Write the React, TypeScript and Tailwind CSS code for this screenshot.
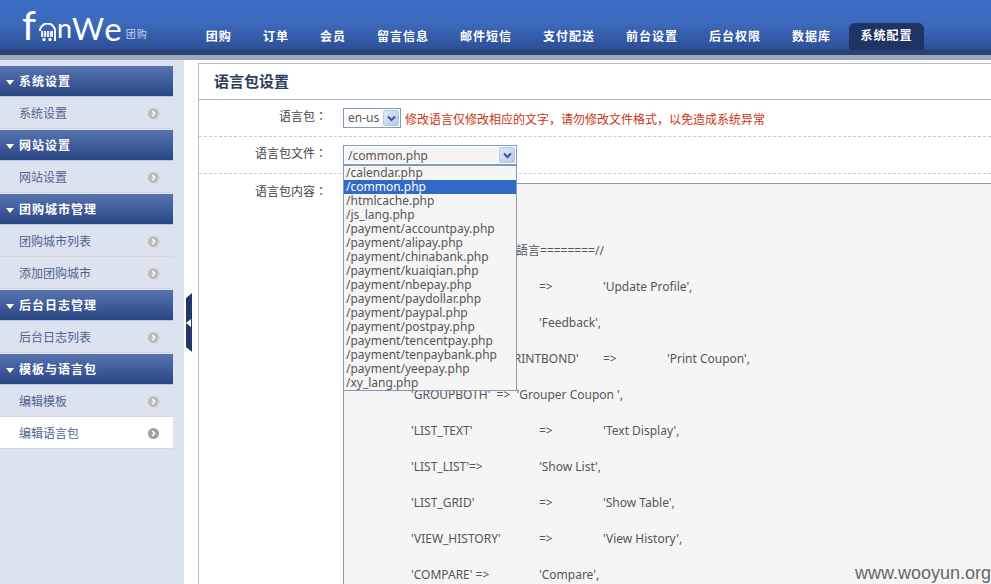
import React from 'react';

const navItems = ['团购', '订单', '会员', '留言信息', '邮件短信', '支付配送', '前台设置', '后台权限', '数据库'];

const menu = [
  { title: '系统设置', items: ['系统设置'] },
  { title: '网站设置', items: ['网站设置'] },
  { title: '团购城市管理', items: ['团购城市列表', '添加团购城市'] },
  { title: '后台日志管理', items: ['后台日志列表'] },
  { title: '模板与语言包', items: ['编辑模板', '编辑语言包'] },
];

const files = [
  '/calendar.php',
  '/common.php',
  '/htmlcache.php',
  '/js_lang.php',
  '/payment/accountpay.php',
  '/payment/alipay.php',
  '/payment/chinabank.php',
  '/payment/kuaiqian.php',
  '/payment/nbepay.php',
  '/payment/paydollar.php',
  '/payment/paypal.php',
  '/payment/postpay.php',
  '/payment/tencentpay.php',
  '/payment/tenpaybank.php',
  '/payment/yeepay.php',
  '/xy_lang.php',
];

const langText = `\t//==============語言========//
\t'UPDATE_PROFILE'\t=>\t'Update Profile',
\t'FEEDBACK'=>\t'Feedback',
\t'GROUPON_USE_PRINTBOND'\t=>\t'Print Coupon',
\t'GROUPBOTH'  =>  'Grouper Coupon ',
\t'LIST_TEXT'\t\t=>\t'Text Display',
\t'LIST_LIST'=>\t'Show List',
\t'LIST_GRID'\t=>\t'Show Table',
\t'VIEW_HISTORY'\t=>\t'View History',
\t'COMPARE' =>\t'Compare',`;

const SelectArrow = () => (
  <span className="flex h-4 w-4 items-center justify-center rounded-[2px] border border-[#b5c8ea] bg-gradient-to-br from-[#dfe8fa] to-[#b4c8ee]">
    <svg width="9" height="7" viewBox="0 0 9 7">
      <path d="M1 1.5 L4.5 5 L8 1.5" fill="none" stroke="#3d5a8c" strokeWidth="2" />
    </svg>
  </span>
);

const ItemIcon = ({ active }: { active: boolean }) => (
  <svg width="11" height="11" viewBox="0 0 11 11" className="shrink-0">
    <circle cx="5.5" cy="5.5" r="5.5" fill={active ? '#a0a0a0' : '#bcbcbc'} />
    <path d="M4.2 3 L6.6 5.5 L4.2 8" fill="none" stroke="#fff" strokeWidth="1.6" />
  </svg>
);

const Logo = () => (
  <div className="flex h-[43px] items-end pl-[22px] text-white [font-family:Lato,sans-serif]">
    <span className="text-[40px] leading-[36px]">f</span>
    <svg width="17" height="19" viewBox="0 0 17 19" className="mb-[1px] ml-[3px]">
      <path d="M1 8 A7.5 7.5 0 0 1 16 8 L16 18" fill="none" stroke="#fff" strokeWidth="2" />
      <rect x="2" y="8" width="12" height="6" fill="#e8ecf4" />
      <path d="M4.5 8v6M7.5 8v6M10.500 8v6" stroke="#5a7ab8" strokeWidth="1" />
      <circle cx="5" cy="16.500" r="1.700" fill="#fff" />
      <circle cx="11" cy="16.500" r="1.700" fill="#fff" />
    </svg>
    <span className="ml-[1px] text-[27px] leading-[30px]">n</span>
    <span className="text-[31px] leading-[30px] tracking-[-1px]">W</span>
    <span className="ml-[1px] text-[33px] leading-[30px]">e</span>
    <span className="mb-[2px] ml-[4px] text-[10px] leading-[14px] tracking-[1px] text-[#c8d6ee] [font-family:'Noto_Sans_CJK_SC',sans-serif]">团购</span>
  </div>
);

const Header = () => (
  <header className="h-[60px] shrink-0 border-b-[5px] border-[#9fa8bb] bg-[#2a4173]">
    <div className="flex h-[50px] justify-between bg-gradient-to-b from-[#3b6ec6] via-[#3b68ba] to-[#2d4f95]">
      <Logo />
      <nav className="flex items-end pr-[67px]">
        {navItems.map((label) => (
          <a key={label} className="mr-[31px] flex h-[27px] items-center text-[12px] font-bold tracking-[1px] text-white">
            {label}
          </a>
        ))}
        <a className="-ml-[13px] flex h-[27px] w-[75px] items-center justify-center rounded-t-[6px] bg-[#1f3364] pb-[2px] text-[12px] font-bold tracking-[1px] text-white">
          系统配置
        </a>
      </nav>
    </div>
  </header>
);

const Sidebar = () => (
  <aside className="w-[184px] shrink-0 bg-[#dde3ee] pt-[6px]">
    {menu.map((group) => (
      <div key={group.title} className="mb-px w-[173px]">
        <div className="flex h-[31px] items-center gap-[5px] border-b border-[#b9c5dc] bg-gradient-to-b from-[#5a74b0] to-[#2a4585] pl-[6px] pt-[2px] text-[12px] font-bold tracking-[1px] text-white">
          <svg width="8" height="5" viewBox="0 0 8 5">
            <path d="M0 0 H8 L4 5 Z" fill="#fff" />
          </svg>
          {group.title}
        </div>
        {group.items.map((item) => (
          <div
            key={item}
            className={
              'flex h-[32px] items-center justify-between border-b border-[#d0d8e6] pl-[19px] pr-[14px] pt-[2px] text-[12px] text-[#4f648f] ' +
              (item === '编辑语言包' ? 'bg-white' : '')
            }
          >
            {item}
            <ItemIcon active={item === '编辑语言包'} />
          </div>
        ))}
      </div>
    ))}
  </aside>
);

const Label = ({ text }: { text: string }) => (
  <label className="block w-[128px] shrink-0 text-right text-[12px] leading-[16px] text-[#444]">
    {text}
    <span className="[font-family:'Noto_Sans_CJK_TC',sans-serif]">：</span>
  </label>
);

const FormRow = ({ label, children }: { label: string; children?: React.ReactNode }) => (
  <div className="flex h-[37px] items-center border-b border-dashed border-[#cccccc]">
    <div className="mb-[3px]">
      <Label text={label} />
    </div>
    <div className="ml-[16px] flex items-center gap-[4px]">{children}</div>
  </div>
);

export default function App() {
  return (
    <div className="relative flex h-[584px] w-[991px] flex-col overflow-hidden bg-white [font-family:'Noto_Sans','Noto_Sans_CJK_SC',sans-serif]">
      <Header />
      <div className="flex min-h-0 flex-1">
        <Sidebar />
        <main className="ml-[14px] mt-[3px] flex min-w-0 flex-1 flex-col border-l border-t border-[#b0bcc8]">
          <h1 className="h-[36px] shrink-0 border-b border-[#a9b5c4] pl-[15px] text-[15px] font-bold leading-[34px] text-[#2c3e5c]">
            语言包设置
          </h1>
          <FormRow label="语言包">
            <div className="flex h-[20px] w-[58px] items-center justify-between border border-[#7f9db9] pl-[4px] pr-px text-[12px] text-[#555]">
              en-us
              <SelectArrow />
            </div>
            <span className="pt-[3px] text-[12px] text-[#cc3311]">修改语言仅修改相应的文字，请勿修改文件格式，以免造成系统异常</span>
          </FormRow>
          <div className="relative">
            <FormRow label="语言包文件">
              <div className="flex h-[20px] w-[174px] items-center justify-between border border-[#7f9db9] p-px text-[12px] text-[#555]">
                <span className="flex h-full w-[153px] items-center bg-[#f5f5f5] pl-[3px] pt-px">/common.php</span>
                <SelectArrow />
              </div>
            </FormRow>
            {/* open dropdown lies over the textarea */}
            <ul className="absolute left-[144px] top-[28px] z-10 w-[174px] border border-[#7f9db9] bg-[#f5f5f5] text-[12px] leading-[14px] text-[#555]">
              {files.map((file) => (
                <li key={file} className={'h-[14px] pl-[2px] ' + (file === '/common.php' ? 'bg-[#316ac5] text-white' : '')}>
                  {file}
                </li>
              ))}
            </ul>
          </div>
          <div className="flex min-h-0 flex-1">
            <div className="mt-[9px]">
              <Label text="语言包内容" />
            </div>
            <pre className="ml-[16px] mt-[9px] flex-1 overflow-hidden border-l border-t border-[#999] bg-[#f5f5f5] pl-[3px] pt-[49px] text-[12px] leading-[36px] text-[#555] [font-family:inherit] [tab-size:64px]">
              {langText}
            </pre>
          </div>
        </main>
      </div>
      {/* sidebar collapse handle */}
      <div className="absolute left-[186px] top-[293px] flex h-[59px] w-[6px] items-center bg-[#22386b] [clip-path:polygon(0_5px,100%_0,100%_100%,0_calc(100%-5px))]">
        <svg width="5" height="8" viewBox="0 0 5 8">
          <path d="M0 4 L5 0 V8 Z" fill="#fff" />
        </svg>
      </div>
      {/* watermark */}
      <span className="absolute bottom-px right-0 text-[18px] leading-[20px] text-[#666] [font-family:'Liberation_Sans',sans-serif]">www.wooyun.org</span>
    </div>
  );
}
